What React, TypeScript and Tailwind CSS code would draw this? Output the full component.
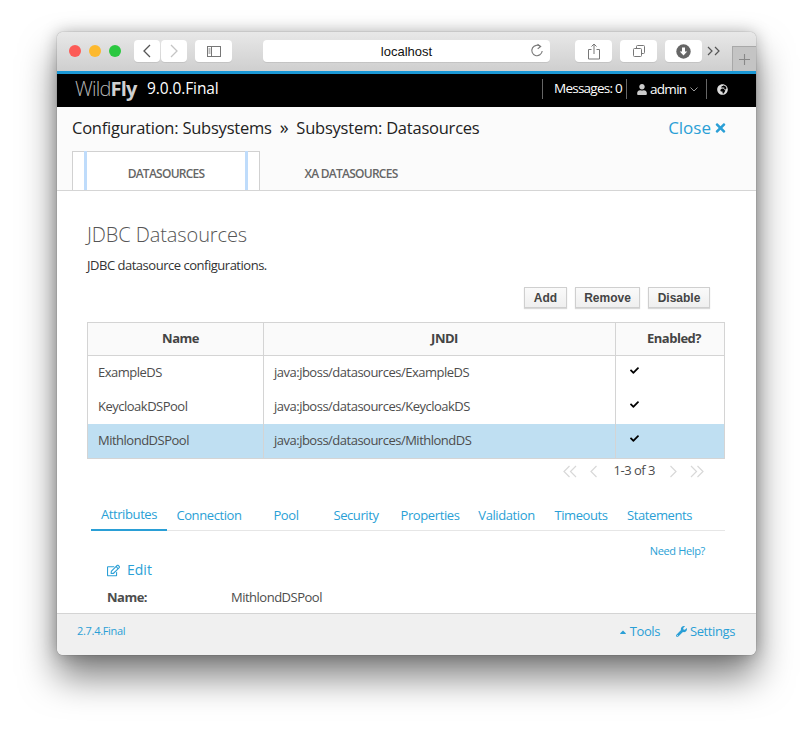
import React from "react";
import { FaCheck, FaTimes, FaUser, FaGlobeAfrica, FaWrench, FaRegEdit, FaCaretUp } from "react-icons/fa";

const S = "font-['Open_Sans',sans-serif]";
const L = "font-['Liberation_Sans',sans-serif]";

function TBtn({ w, children, ml = "" }: { w: string; children: React.ReactNode; ml?: string }) {
  return <div className={`${w} ${ml} h-[22px] bg-white rounded-[4px] flex items-center justify-center shadow-[0_1px_0_rgba(0,0,0,0.08)]`}>{children}</div>;
}

function Toolbar() {
  return (
    <div className="relative h-[39px] shrink-0 rounded-t-[6px] bg-gradient-to-b from-[#e8e8e8] to-[#cfcfcf] flex items-center pl-[12px] pb-[1px]">
      <span className="w-[12px] h-[12px] rounded-full bg-[#fc5b57]" />
      <span className="w-[12px] h-[12px] rounded-full bg-[#fdb92e] ml-[8px]" />
      <span className="w-[12px] h-[12px] rounded-full bg-[#2bc840] ml-[8px]" />
      <TBtn w="w-[26px]" ml="ml-[13px]">
        <svg width="10" height="14" viewBox="0 0 10 14" fill="none" stroke="#555" strokeWidth="1.3"><path d="M8 1 2 7l6 6" /></svg>
      </TBtn>
      <TBtn w="w-[26px]" ml="ml-[1px]">
        <svg width="10" height="14" viewBox="0 0 10 14" fill="none" stroke="#c4c4c4" strokeWidth="1.3"><path d="M2 1l6 6-6 6" /></svg>
      </TBtn>
      <TBtn w="w-[37px]" ml="ml-[8px]">
        <svg width="16" height="13" viewBox="0 0 16 13" fill="none" stroke="#777" strokeWidth="1"><rect x="1.5" y="1.5" width="13" height="10" /><path d="M5.5 1.5v10M2.5 4h2M2.5 6h2M2.5 8h2" /></svg>
      </TBtn>
      <div className="relative ml-[31px] w-[287px] h-[22px] bg-white rounded-[4px] flex items-center justify-center shadow-[0_1px_0_rgba(0,0,0,0.08)]">
        <span className={`${L} text-[13px] text-[#111] mt-[1px]`}>localhost</span>
        <svg className="absolute right-[6px] top-[3px]" width="14" height="15" viewBox="0 0 14 15" fill="none" stroke="#777" strokeWidth="1.1"><path d="M10.5 3.6A5.2 5.2 0 1 0 12.2 8" /><path d="M7.5 1.2l3.2 2.4-3 2.2" /></svg>
      </div>
      <TBtn w="w-[37px]" ml="ml-[25px]">
        <svg width="14" height="17" viewBox="0 0 14 17" fill="none" stroke="#777" strokeWidth="1"><path d="M4.5 6.5h-3v9.5h11V6.5h-3M7 11V1M4.5 3.5 7 1l2.5 2.5" /></svg>
      </TBtn>
      <TBtn w="w-[37px]" ml="ml-[8px]">
        <svg width="14" height="14" viewBox="0 0 14 14" fill="none" stroke="#777" strokeWidth="1"><rect x="1.5" y="4.5" width="8" height="8" rx="1" /><path d="M4.5 4.5v-2a1 1 0 0 1 1-1h6a1 1 0 0 1 1 1v6a1 1 0 0 1-1 1h-2" /></svg>
      </TBtn>
      <TBtn w="w-[37px]" ml="ml-[8px]">
        <svg width="15" height="15" viewBox="0 0 15 15"><circle cx="7.5" cy="7.5" r="7.2" fill="#666" /><path d="M6 3.5h3v4h2.2L7.5 11.500 3.800 7.500H6z" fill="#fff" /></svg>
      </TBtn>
      <svg className="ml-[5px]" width="14" height="10" viewBox="0 0 14 10" fill="none" stroke="#555" strokeWidth="1.2"><path d="M1 1l4 4-4 4M8 1l4 4-4 4" /></svg>
      <div className="absolute right-0 bottom-0 w-[24px] h-[25px] bg-[#c4c4c4] border border-b-0 border-r-0 border-[#a8a8a8] flex items-center justify-center">
        <svg width="13" height="13" viewBox="0 0 13 13" stroke="#888" strokeWidth="1.1"><path d="M6.500 1v11M1 6.500h11" /></svg>
      </div>
    </div>
  );
}

function Header() {
  return (
    <div className={`${S} h-[36px] shrink-0 bg-black border-t-[3px] border-[#1b98d5] flex items-center pl-[18px] pb-[3px] text-white`}>
      <span className="text-[20px] leading-none text-[#b5b5b5] tracking-[-0.8px] font-light w-[72px]">Wild<b className="font-bold text-[#d0d0d0]">Fly</b></span>
      <span className="text-[15.5px] leading-none tracking-[-0.1px]">9.0.0.Final</span>
      <div className="ml-auto flex items-center h-[20px] pr-[28px] text-[13.5px]">
        <div className="h-[20px] border-l border-[#666] pl-[11px] w-[84px] tracking-[-0.75px] leading-[18px]">Messages: 0</div>
        <div className="h-[20px] border-l border-[#666] pl-[10px] flex items-center w-[80px]">
          <FaUser className="text-[#ccc] w-[10px] h-[11px] mr-[3px]" />
          <span className="tracking-[-0.7px]">admin</span>
          <svg className="ml-[4px] mt-[1px]" width="8" height="5" viewBox="0 0 8 5" fill="none" stroke="#999"><path d="M.5.5 4 4 7.500.5" /></svg>
        </div>
        <div className="h-[20px] border-l border-[#666] pl-[10px] flex items-center">
          <FaGlobeAfrica className="w-[11px] h-[11px] text-[#ddd]" />
        </div>
      </div>
    </div>
  );
}

function TopTabs() {
  return (
    <div className="bg-[#fbfbfb] shrink-0 h-[84px] flex flex-col">
      <div className="flex items-center justify-between pl-[15px] pr-[29px] h-[45px] pb-[3px]">
        <div className="text-[16.5px] text-[#222] tracking-[-0.23px]">Configuration: Subsystems<span className="mx-[8px] text-[18px]">»</span>Subsystem: Datasources</div>
        <div className="text-[17px] text-[#2a9fd6] flex items-center gap-[3px]">Close <FaTimes className="w-[13px] h-[14px]" /></div>
      </div>
      <div className="flex-1 flex border-b border-[#d5d5d5] pl-[15px]">
        <div className="relative w-[188px] h-[39px] bg-white border border-b-0 border-[#d1d1d1] flex items-center justify-center pt-[6px] text-[12px] tracking-[-0.75px] font-semibold text-[#666]">
          <span className="absolute left-[11px] -top-[1px] bottom-0 w-[3px] bg-[#bfdcfb]" />
          DATASOURCES
          <span className="absolute right-[11px] -top-[1px] bottom-0 w-[3px] bg-[#bfdcfb]" />
        </div>
        <div className="w-[184px] h-[38px] flex items-center justify-center pt-[8px] pr-[2px] text-[12px] tracking-[-0.75px] font-semibold text-[#666]">XA DATASOURCES</div>
      </div>
    </div>
  );
}

const rows = [
  ["ExampleDS", "java:jboss/datasources/ExampleDS"],
  ["KeycloakDSPool", "java:jboss/datasources/KeycloakDS"],
  ["MithlondDSPool", "java:jboss/datasources/MithlondDS"],
];

function Table() {
  return (
    <div className="border border-[#d4d4d4] text-[13px] tracking-[-0.5px] text-[#4d4d4d] w-[638px] mt-[14px]">
      <div className="grid grid-cols-[175px_352px_1fr] h-[33px] border-b border-[#d4d4d4] bg-[#fafafa] font-bold text-[#444] items-stretch">
        <div className="flex items-center justify-center pl-[10px]">Name</div>
        <div className="flex items-center justify-center pl-[10px] border-l border-[#d4d4d4]">JNDI</div>
        <div className="flex items-center justify-end pr-[23px] border-l border-[#d4d4d4]">Enabled?</div>
      </div>
      {rows.map((r, i) => (
        <div key={r[0]} className={`grid grid-cols-[175px_352px_1fr] h-[34px] ${i === 2 ? "bg-[#bfdff2]" : "bg-white"}`}>
          <div className="flex items-center pl-[10px]">{r[0]}</div>
          <div className="flex items-center pl-[10px] border-l border-[#d4d4d4]">{r[1]}</div>
          <div className="border-l border-[#d4d4d4] pl-[13px] pt-[10px]">
            <FaCheck className="w-[11px] h-[9px] text-black" />
          </div>
        </div>
      ))}
    </div>
  );
}

function Pager() {
  const c = "#d8d8d8";
  return (
    <div className="flex items-center justify-end h-[24px] w-[638px] text-[13px] tracking-[-0.5px] text-[#4d4d4d] pr-[21px]">
      <svg className="-ml-[3px]" width="14" height="13" viewBox="0 0 14 13" fill="none" stroke={c} strokeWidth="1.2"><path d="M6.500 1 1 6.500 6.500 12M13 1 7.500 6.500 13 12" /></svg>
      <svg className="ml-[12px]" width="9" height="13" viewBox="0 0 9 13" fill="none" stroke={c} strokeWidth="1.2"><path d="M7.500 1 2 6.500 7.500 12" /></svg>
      <span className="ml-[16px]">1-3 of 3</span>
      <svg className="ml-[14px]" width="9" height="13" viewBox="0 0 9 13" fill="none" stroke={c} strokeWidth="1.2"><path d="M1.500 1 7 6.500 1.500 12" /></svg>
      <svg className="ml-[12px]" width="14" height="13" viewBox="0 0 14 13" fill="none" stroke={c} strokeWidth="1.2"><path d="M1 1l5.500 5.500L1 12M7.500 1 13 6.500 7.500 12" /></svg>
    </div>
  );
}

const tabs: [string, string][] = [
  ["Connection", "w-[84px]"],
  ["Pool", "w-[70px]"],
  ["Security", "w-[70px]"],
  ["Properties", "w-[78px]"],
  ["Validation", "w-[75px]"],
  ["Timeouts", "w-[74px]"],
  ["Statements", "w-[83px]"],
];

function SubTabs() {
  return (
    <div className="mt-[16px] ml-[4px] w-[634px] border-b border-[#e6e6e6] h-[32px] flex text-[13px] tracking-[-0.4px] text-[#2a9fd6]">
      <div className="w-[76px] h-[32px] border-b-2 border-[#2a9fd6] text-center leading-[30px]">Attributes</div>
      {tabs.map(([t, w]) => (
        <div key={t} className={`${w} text-center leading-[33px] shrink-0`}>{t}</div>
      ))}
    </div>
  );
}

export default function App() {
  return (
    <div className={`${S} w-[812px] h-[735px] bg-white pt-[32px] pl-[57px] overflow-hidden`}>
      <div className="w-[699px] h-[623px] flex flex-col rounded-[6px] bg-white shadow-[0_22px_36px_rgba(0,0,0,0.5),0_0_16px_rgba(0,0,0,0.25),0_0_1px_rgba(0,0,0,0.6)]">
        <Toolbar />
        <Header />
        <TopTabs />
        <div className="flex-1 min-h-0 overflow-hidden pl-[30px] pt-[30px]">
          <h1 className="text-[20px] leading-[28px] font-light tracking-[-0.1px] text-[#555]">JDBC Datasources</h1>
          <p className="text-[13px] tracking-[-0.48px] leading-[18px] mt-[7px] text-[#333]">JDBC datasource configurations.</p>
          <div className={`${L} flex justify-end gap-[8px] w-[623px] mt-[13px] text-[12px] font-bold text-[#444]`}>
            {[["Add", "w-[43px]"], ["Remove", "w-[65px]"], ["Disable", "w-[62px]"]].map(([t, w]) => (
              <div key={t} className={`${w} h-[21px] flex items-center justify-center bg-gradient-to-b from-[#fafafa] to-[#efefef] border border-[#cfcfcf] shadow-[0_1px_1px_rgba(0,0,0,0.15)]`}>{t}</div>
            ))}
          </div>
          <Table />
          <Pager />
          <SubTabs />
          <div className="w-[618px] text-right text-[11px] tracking-[-0.35px] leading-[16px] text-[#2a9fd6] mt-[12px]">Need Help?</div>
          <div className="ml-[20px] mt-[1px] flex items-center text-[14px] leading-[20px] text-[#2a9fd6]">
            <FaRegEdit className="w-[13px] h-[13px] mr-[7px]" />Edit
          </div>
          <div className="ml-[20px] mt-[7px] flex text-[13px] tracking-[-0.5px] leading-[20px] text-[#4d4d4d]">
            <span className="w-[124px] font-bold">Name:</span>
            <span>MithlondDSPool</span>
          </div>
        </div>
        <div className="h-[42px] shrink-0 bg-[#f0f0f0] border-t border-[#d4d4d4] rounded-b-[6px] flex items-center pl-[20px] pr-[21px] pb-[6px] text-[#2a9fd6]">
          <span className="text-[11px] tracking-[-0.3px]">2.7.4.Final</span>
          <span className="ml-auto text-[13px] tracking-[-0.4px] flex items-center"><FaCaretUp className="w-[8px] h-[10px] mr-[3px]" />Tools</span>
          <span className="ml-[16px] text-[13px] tracking-[-0.4px] flex items-center"><FaWrench className="w-[11px] h-[11px] mr-[3px]" />Settings</span>
        </div>
      </div>
    </div>
  );
}
